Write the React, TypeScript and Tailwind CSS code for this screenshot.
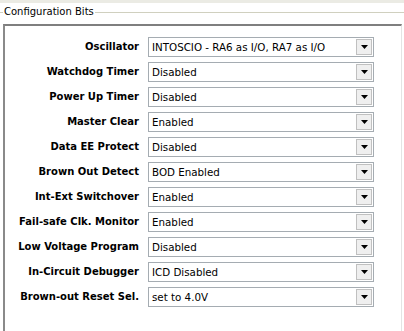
const rows: [string, string][] = [
  ["Oscillator", "INTOSCIO - RA6 as I/O, RA7 as I/O"],
  ["Watchdog Timer", "Disabled"],
  ["Power Up Timer", "Disabled"],
  ["Master Clear", "Enabled"],
  ["Data EE Protect", "Disabled"],
  ["Brown Out Detect", "BOD Enabled"],
  ["Int-Ext Switchover", "Enabled"],
  ["Fail-safe Clk. Monitor", "Enabled"],
  ["Low Voltage Program", "Disabled"],
  ["In-Circuit Debugger", "ICD Disabled"],
  ["Brown-out Reset Sel.", "set to 4.0V"],
];

const Combo = ({ value }: { value: string }) => (
  <div className="flex h-[20px] w-[226px] items-center border border-[#a5acb2] bg-white pl-[3px] pr-[1px]">
    <span className="flex-1 truncate text-[10.3px] leading-none text-black">{value}</span>
    <div className="flex h-[16px] w-[16px] items-center justify-center border border-[#c0c0c0] bg-[#efefef]">
      <svg width="7" height="4" viewBox="0 0 7 4">
        <path d="M0 0h7L3.5 4z" fill="#000" />
      </svg>
    </div>
  </div>
);

export default function App() {
  return (
    <div
      className="flex h-[331px] w-[404px] flex-col overflow-hidden bg-white"
      style={{ fontFamily: "Tahoma, 'DejaVu Sans', sans-serif" }}
    >
      <div className="h-[3px] bg-[#ebebe4]" />
      <div className="flex h-[18px] items-center">
        <div className="h-px w-[3px] bg-[#d0d0bf]" />
        <span className="px-[1px] text-[10px] leading-none text-black">Configuration Bits</span>
        <div className="h-px flex-1 bg-[#d0d0bf]" />
      </div>
      <div className="ml-[3px] mr-[2px] mt-[3px] flex flex-1 flex-col gap-[5px] border-l-2 border-t-2 border-r border-l-[#8a8a8a] border-t-[#7f7f7f] border-r-[#e4e4e4] pt-[11px]">
        {rows.map(([label, value]) => (
          <div key={label} className="flex items-center">
            <div className="w-[134px] text-right text-[10px] font-bold leading-none text-black">{label}</div>
            <div className="ml-[9px]">
              <Combo value={value} />
            </div>
          </div>
        ))}
      </div>
    </div>
  );
}
